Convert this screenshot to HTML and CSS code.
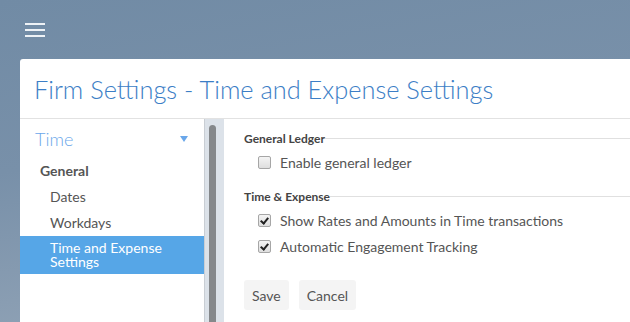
FILE: index.html
```html
<!DOCTYPE html>
<html lang="en">
<head>
    <meta charset="UTF-8">
    <meta name="viewport" content="width=device-width, initial-scale=1.0">
    <title>Firm Settings</title>
    <link rel="stylesheet" href="styles.css">
</head>
<body>
    <div class="topbar">
        <span class="menu-btn"><span></span><span></span><span></span></span>
    </div>

    <div class="card">
        <div class="card-head">
            <h1>Firm Settings - Time and Expense Settings</h1>
        </div>

        <div class="card-body">
            <!-- left navigation -->
            <nav class="sidebar">
                <div class="nav-top">
                    <span>Time</span>
                    <span class="caret"></span>
                </div>
                <div class="nav-group">General</div>
                <a class="nav-item">Dates</a>
                <a class="nav-item">Workdays</a>
                <a class="nav-item active">Time and Expense Settings</a>
            </nav>
            <div class="scroll-track"><div class="scroll-thumb"></div></div>

            <!-- settings form -->
            <form class="settings">
                <div class="section-title"><span>General Ledger</span><span class="rule"></span></div>
                <label class="check"><input type="checkbox"> Enable general ledger</label>

                <div class="section-title"><span>Time &amp; Expense</span><span class="rule"></span></div>
                <label class="check"><input type="checkbox" checked> Show Rates and Amounts in Time transactions</label>
                <label class="check"><input type="checkbox" checked> Automatic Engagement Tracking</label>

                <div class="actions">
                    <button type="button" class="btn">Save</button>
                    <button type="button" class="btn">Cancel</button>
                </div>
            </form>
        </div>
    </div>
</body>
</html>
```

FILE: styles.css
```css
body {
    margin: 0;
    height: 322px;
    overflow: hidden;
    font-family: Lato, "Open Sans", sans-serif;
    background: linear-gradient(170deg, #718ba5 0%, #7890a9 40%, #9aaabb 100%);
    display: flex;
    flex-direction: column;
}

.topbar {
    height: 59px;
    flex-shrink: 0;
    padding: 23px 0 0 25px;
    box-sizing: border-box;
}

.menu-btn {
    display: flex;
    flex-direction: column;
    gap: 4px;
    width: 20px;
}

.menu-btn span {
    display: block;
    height: 2px;
    background: #eef2f6;
}

.card {
    flex: 1;
    margin-left: 20px;
    background: #fff;
    border-radius: 3px 0 0 0;
    display: flex;
    flex-direction: column;
    width: 640px;
}

.card-head {
    height: 59px;
    border-bottom: 1px solid #e2e2e2;
    padding-left: 14px;
    display: flex;
    align-items: center;
}

h1 {
    margin: 0;
    font-size: 25.4px;
    font-weight: 300;
    color: #3c7ec6;
}

.card-body {
    flex: 1;
    display: flex;
}

.sidebar {
    border-right: 1px solid #c9ced4;
    box-sizing: border-box;
    width: 185px;
}

.nav-top {
    display: flex;
    justify-content: space-between;
    align-items: center;
    padding: 9px 16px 0 15px;
    height: 22px;
    font-size: 18px;
    font-weight: 300;
    color: #6aa7ea;
}

.caret {
    width: 0;
    height: 0;
    border-left: 4px solid transparent;
    border-right: 4px solid transparent;
    border-top: 6px solid #6aa7ea;
}

.nav-group {
    padding: 12px 0 0 20px;
    font-size: 14px;
    font-weight: bold;
    color: #555;
    line-height: 17px;
}

.nav-item {
    display: block;
    padding: 0 20px 0 30px;
    font-size: 14px;
    color: #555;
    line-height: 17px;
    margin-top: 9px;
}

.nav-item.active {
    background: #56a6e7;
    color: #fff;
    line-height: 14px;
    padding-top: 5px;
    padding-bottom: 5px;
    margin-top: 5px;
}

.scroll-track {
    width: 19px;
    background: #dce2e9;
    padding: 6px 0 0 4px;
    box-sizing: border-box;
}

.scroll-thumb {
    width: 7px;
    height: 100%;
    background: #85888b;
    border-radius: 4px 4px 0 0;
}

.settings {
    flex: 1;
    padding: 12px 0 0 20px;
    margin: 0;
}

.section-title {
    display: flex;
    align-items: center;
    font-size: 12px;
    font-weight: bold;
    color: #444;
    height: 14px;
}

.section-title .rule {
    flex: 1;
    height: 1px;
    background: #e0e0e0;
}

.check {
    display: flex;
    align-items: center;
    font-size: 14px;
    color: #555;
    margin: 9px 0 18px 14px;
    line-height: 17px;
}

.check + .check {
    margin-top: -9px;
}

.check input {
    appearance: none;
    -webkit-appearance: none;
    position: relative;
    margin: 0 9px 0 0;
    width: 13px;
    height: 13px;
    border: 1px solid #a6a6a6;
    border-radius: 2px;
    background: linear-gradient(#f4f4f4, #dedede);
    box-sizing: border-box;
}

.check input:checked::after {
    content: "";
    position: absolute;
    left: 3px;
    top: 1px;
    width: 3px;
    height: 6px;
    border: solid #222;
    border-width: 0 2px 2px 0;
    transform: rotate(40deg);
}

.actions {
    display: flex;
    gap: 10px;
    margin-top: 25px;
}

.btn {
    font-family: inherit;
    font-size: 14px;
    color: #555;
    background: #f4f4f4;
    border: none;
    border-radius: 3px;
    height: 30px;
    padding: 0 8px;
}
```
